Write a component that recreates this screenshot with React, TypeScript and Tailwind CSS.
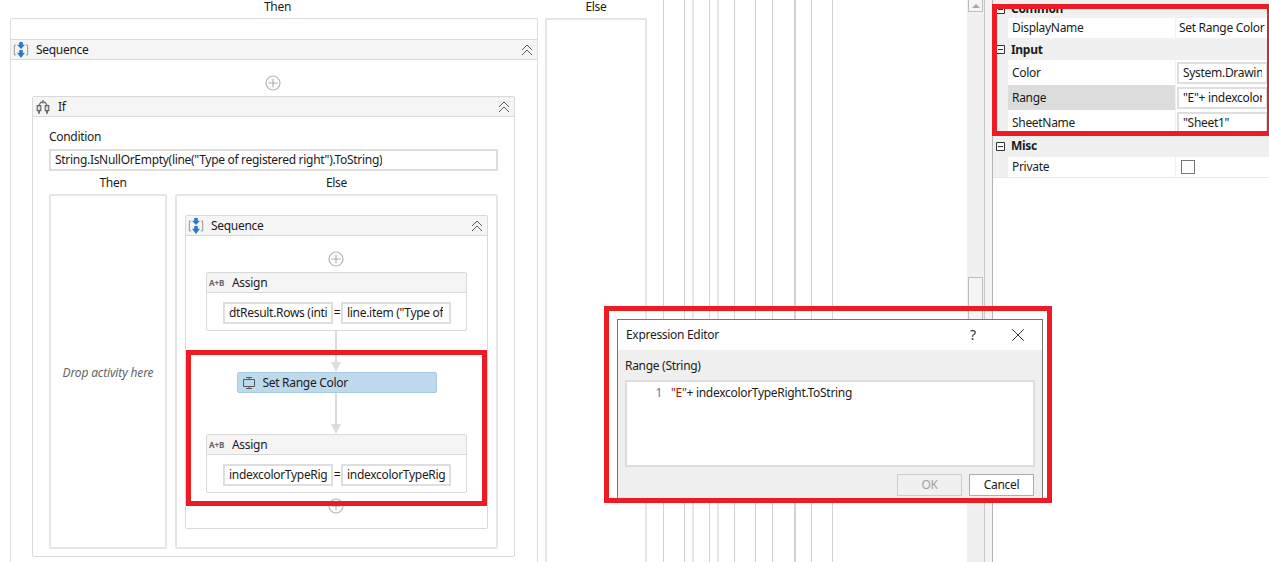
import type { ReactNode } from 'react';
import { X } from 'lucide-react';

const LINES = [
  'ml-[16px] w-px bg-[#d2d2d2]',
  'ml-[20px] w-px bg-[#d2d2d2]',
  'ml-[7px] w-[2px] bg-[#e6e6e6]',
  'ml-[15px] w-px bg-[#d2d2d2]',
  'ml-[7px] w-[2px] bg-[#e6e6e6]',
  'ml-[15px] w-px bg-[#d2d2d2]',
  'ml-[20px] w-px bg-[#d2d2d2]',
  'ml-[16px] w-px bg-[#d2d2d2]',
  'ml-[21px] w-[2px] bg-[#d2d2d2]',
  'ml-[15px] w-px bg-[#d2d2d2]',
  'ml-[20px] w-px bg-[#d2d2d2]',
];

function SequenceIcon() {
  return (
    <svg width="16" height="16" viewBox="0 0 18 18" className="shrink-0">
      <path d="M3.5 3.5H1.5V14.5H3.5M14.5 3.5H16.5V14.5H14.5" fill="none" stroke="#8a8a8a" />
      <path d="M7 0H11V3H13.5L9 8L4.5 3H7Z" fill="#2f78c4" />
      <path d="M7 9H11V12H13.5L9 18L4.5 12H7Z" fill="#2f78c4" />
    </svg>
  );
}

function IfIcon() {
  return (
    <svg width="16" height="16" viewBox="0 0 18 18" className="shrink-0">
      <path d="M9 1V5M4.5 6.5L7 3.5H11L13.5 6.5" fill="none" stroke="#666" strokeWidth="1.3" />
      <path d="M2.5 7.5H6.5V13H2.5ZM11.5 7.5H15.5V13H11.5Z" fill="#ddd" stroke="#666" strokeWidth="1.3" />
      <path d="M4.5 13.5V16.5M13.5 13.5V16.5" stroke="#666" strokeWidth="2" />
    </svg>
  );
}

function RangeIcon() {
  return (
    <svg width="16" height="16" viewBox="0 0 16 16" className="shrink-0">
      <path d="M2.5 4.5H13.5V11.5H2.5Z" fill="none" stroke="#555" />
      <path d="M5 2.5H11M8 2.5V4.5M5 13.5H11M8 11.5V13.5" stroke="#555" />
    </svg>
  );
}

function PlusButton() {
  return (
    <svg width="16" height="16" viewBox="0 0 16 16">
      <circle cx="8" cy="8" r="7" fill="#fff" stroke="#b4b4b4" strokeWidth="1.2" />
      <path d="M8 3.5V12.5M3.5 8H12.5" stroke="#a8a8a8" />
    </svg>
  );
}

function Connector() {
  return (
    <svg width="12" height="41" viewBox="0 0 12 41" className="mr-[2px] block">
      <path d="M6 0V32" stroke="#dcdcdc" strokeWidth="2" />
      <path d="M1 31H11L6 41Z" fill="#dcdcdc" />
    </svg>
  );
}

function Collapse() {
  return (
    <svg width="12" height="12" viewBox="0 0 12 12" className="ml-auto shrink-0">
      <path d="M1 6L6 1L11 6M1 11L6 6L11 11" fill="none" stroke="#5f5f5f" />
    </svg>
  );
}

function Header({ icon, title, collapse }: { icon: ReactNode; title: string; collapse?: boolean }) {
  return (
    <div className="flex h-[20px] shrink-0 items-center border-b border-[#d9d9d9] bg-[#f5f5f5] pl-[2px] pr-[4px]">
      <div className="mr-[7px] flex w-[16px] items-center">{icon}</div>
      <span>{title}</span>
      {collapse && <Collapse />}
    </div>
  );
}

function ExprBox({ text, className }: { text: string; className?: string }) {
  return (
    <div className={`flex h-[22px] items-center border-2 border-[#dedede] bg-white px-[4px] ${className ?? ''}`}>
      <div className="h-[16px] overflow-hidden whitespace-nowrap leading-[16px]">{text}</div>
    </div>
  );
}

function Assign({ left, right }: { left: string; right: string }) {
  return (
    <div className="h-[59px] w-[261px] overflow-hidden rounded-[2px] border border-[#d9d9d9] bg-white">
      <Header
        title="Assign"
        icon={<span className="text-[8px] font-bold leading-none tracking-normal text-[#666]">A+B</span>}
      />
      <div className="flex items-center pl-[16px] pt-[9px]">
        <ExprBox text={left} className="w-[110px]" />
        <span className="w-[8px] text-center">=</span>
        <ExprBox text={right} className="w-[110px]" />
      </div>
    </div>
  );
}

function InnerSequence() {
  return (
    <div className="flex h-[314px] w-[303px] flex-col items-center rounded-[2px] border border-[#d9d9d9] bg-white">
      <div className="w-full">
        <Header title="Sequence" collapse icon={<SequenceIcon />} />
      </div>
      <div className="mt-[15px] mb-[5px] mr-[2px] flex h-[16px]"><PlusButton /></div>
      <Assign left="dtResult.Rows (inti" right={'line.item ("Type of'} />
      <Connector />
      <div className="flex h-[21px] w-[200px] items-center gap-[6px] rounded-[2px] border border-[#a8c9e2] bg-[#bdd9ee] pl-[3px]">
        <RangeIcon />
        <span>Set Range Color</span>
      </div>
      <Connector />
      <Assign left="indexcolorTypeRig" right="indexcolorTypeRig" />
      <div className="mt-[5px] mr-[2px] flex h-[16px]"><PlusButton /></div>
    </div>
  );
}

function IfBlock() {
  return (
    <div className="ml-[21px] h-[461px] w-[483px] rounded-[2px] border border-[#d9d9d9] bg-white">
      <Header title="If" collapse icon={<IfIcon />} />
      <div className="px-[16px] pt-[11px]">
        <div className="h-[18px] leading-[18px]">Condition</div>
        <ExprBox text={'String.IsNullOrEmpty(line("Type of registered right").ToString)'} className="mt-[3px]" />
        <div className="mt-[2px] flex h-[20px] items-center">
          <span className="w-[126px] pl-[2px] text-center">Then</span>
          <span className="flex-1 text-center">Else</span>
        </div>
        <div className="mt-[1px] flex h-[355px] gap-[8px]">
          <div className="flex w-[118px] items-center justify-center rounded-[2px] border-2 border-[#e6e6e6] pt-[3px] italic tracking-[-0.15px] text-[#666]">
            Drop activity here
          </div>
          <div className="flex-1 rounded-[2px] border-2 border-[#e6e6e6] pl-[8px] pt-[19px]">
            <InnerSequence />
          </div>
        </div>
      </div>
    </div>
  );
}

function Section({ title, className }: { title: string; className?: string }) {
  return (
    <div className={`flex items-center bg-[#f0f0f0] pl-[3px] font-bold ${className ?? ''}`}>
      <svg width="9" height="9" viewBox="0 0 9 9" className="mr-[6px] shrink-0">
        <path d="M.5.5H8.5V8.5H.5Z" fill="#fff" stroke="#333" />
        <path d="M2 4.5H7" stroke="#333" />
      </svg>
      {title}
    </div>
  );
}

function PropRow({ name, selected, className, children }: { name: string; selected?: boolean; className: string; children: ReactNode }) {
  return (
    <div className={`flex bg-[#f0f0f0] pl-[15px] ${className}`}>
      <div className={`flex w-[167px] items-center pl-[4px] ${selected ? 'bg-[#dcdcdc]' : 'bg-white'}`}>{name}</div>
      <div className="ml-px flex flex-1 items-center bg-white pl-px">{children}</div>
    </div>
  );
}

function Properties() {
  return (
    <div className="w-[277px] border-l border-[#b5b5b5]">
      <Section title="Common" className="h-[18px]" />
      <PropRow name="DisplayName" className="h-[20px]">
        <span className="whitespace-nowrap pl-[2px]">Set Range Color</span>
      </PropRow>
      <Section title="Input" className="h-[22px] pt-[1px]" />
      <PropRow name="Color" className="h-[25px]">
        <ExprBox text="System.Drawing.Color.Red" className="w-[91px]" />
      </PropRow>
      <PropRow name="Range" selected className="h-[25px]">
        <ExprBox text={'"E"+ indexcolorTypeRight.ToString'} className="w-[91px]" />
      </PropRow>
      <PropRow name="SheetName" className="h-[26px]">
        <ExprBox text={'"Sheet1"'} className="w-[91px]" />
      </PropRow>
      <Section title="Misc" className="h-[20px]" />
      <PropRow name="Private" className="h-[22px] border-b border-[#e8e8e8] pt-[1px]">
        <div className="ml-[4px] h-[14px] w-[14px] border border-[#777] bg-white" />
      </PropRow>
    </div>
  );
}

function Dialog() {
  return (
    <div className="absolute left-[617px] top-[319px] flex h-[184px] w-[426px] flex-col border border-[#777] bg-[#efefef]">
      <div className="flex h-[30px] shrink-0 items-center bg-white pl-[8px]">
        <span className="w-[341px]">Expression Editor</span>
        <span className="w-[12px] text-center text-[14px] text-[#333]">?</span>
        <X size={22} strokeWidth={1} className="ml-[28px] text-[#222]" />
      </div>
      <div className="px-[7px] pt-[7px]">
        <div className="h-[18px] leading-[18px]">Range (String)</div>
        <div className="mt-[5px] flex h-[87px] w-[410px] items-start border-2 border-[#dcdcdc] bg-white pt-[5px]">
          <span className="w-[35px] text-right text-[#2b91af]">1</span>
          <span className="ml-[9px]"><span className="text-[#a31515]">"E"</span>+ indexcolorTypeRight.ToString</span>
        </div>
        <div className="mt-[7px] flex justify-end gap-[7px] pr-[1px]">
          <div className="flex h-[22px] w-[65px] items-center justify-center border border-[#cccccc] bg-[#f0f0f0] text-[#a0a0a0]">OK</div>
          <div className="flex h-[22px] w-[65px] items-center justify-center border border-[#adadad] bg-white">Cancel</div>
        </div>
      </div>
    </div>
  );
}

export default function App() {
  return (
    <div
      className="relative flex h-[562px] w-[1269px] overflow-hidden bg-white text-[12px] leading-none tracking-[-0.3px] text-[#1b1b1b]"
      style={{ fontFamily: '"Noto Sans", sans-serif' }}
    >
      <div className="flex w-[647px] flex-col">
        <div className="flex h-[18px] items-start pl-[10px] leading-[14px]">
          <span className="w-[535px] text-center">Then</span>
          <span className="w-[102px] text-center">Else</span>
        </div>
        <div className="flex flex-1 gap-[7px] overflow-hidden pl-[10px]">
          <div className="w-[528px] rounded-t-[2px] border border-b-0 border-[#dedede] pt-[20px]">
            <div className="h-full">
              <div className="border-t border-[#d9d9d9]">
                <Header title="Sequence" collapse icon={<SequenceIcon />} />
              </div>
              <div className="flex h-[36px] items-end justify-center pb-[5px] pr-[2px]"><PlusButton /></div>
              <IfBlock />
            </div>
          </div>
          <div className="w-[102px] rounded-t-[2px] border-2 border-b-0 border-[#e6e6e6]" />
        </div>
      </div>

      <div className="flex w-[320px]">
        {LINES.map((line, i) => (
          <div key={i} className={line} />
        ))}
      </div>

      <div className="flex w-[17px] flex-col items-center bg-[#f0f0f0]">
        <div className="flex h-[12px] w-[15px] items-center justify-center border border-t-0 border-[#bdbdbd] bg-[#f5f5f5]">
          <div className="h-0 w-0 border-x-[4px] border-b-[4px] border-x-transparent border-b-[#a8a8a8]" />
        </div>
        <div className="mt-[265px] h-[130px] w-[15px] border border-[#bdbdbd] bg-[#f5f5f5]" />
      </div>
      <div className="w-[8px] border-l border-[#c8c8c8] bg-[#f3f3f3]" />
      <Properties />

      <Dialog />

      <div className="absolute left-[186px] top-[350px] h-[156px] w-[301px] border-[5px] border-[#ed1c24]" />
      <div className="absolute left-[604px] top-[306px] h-[197px] w-[448px] border-[5px] border-[#ed1c24]" />
      <div className="absolute left-[992px] top-[4px] h-[132px] w-[277px] border-[5px] border-r-2 border-[#ed1c24]" />
    </div>
  );
}
